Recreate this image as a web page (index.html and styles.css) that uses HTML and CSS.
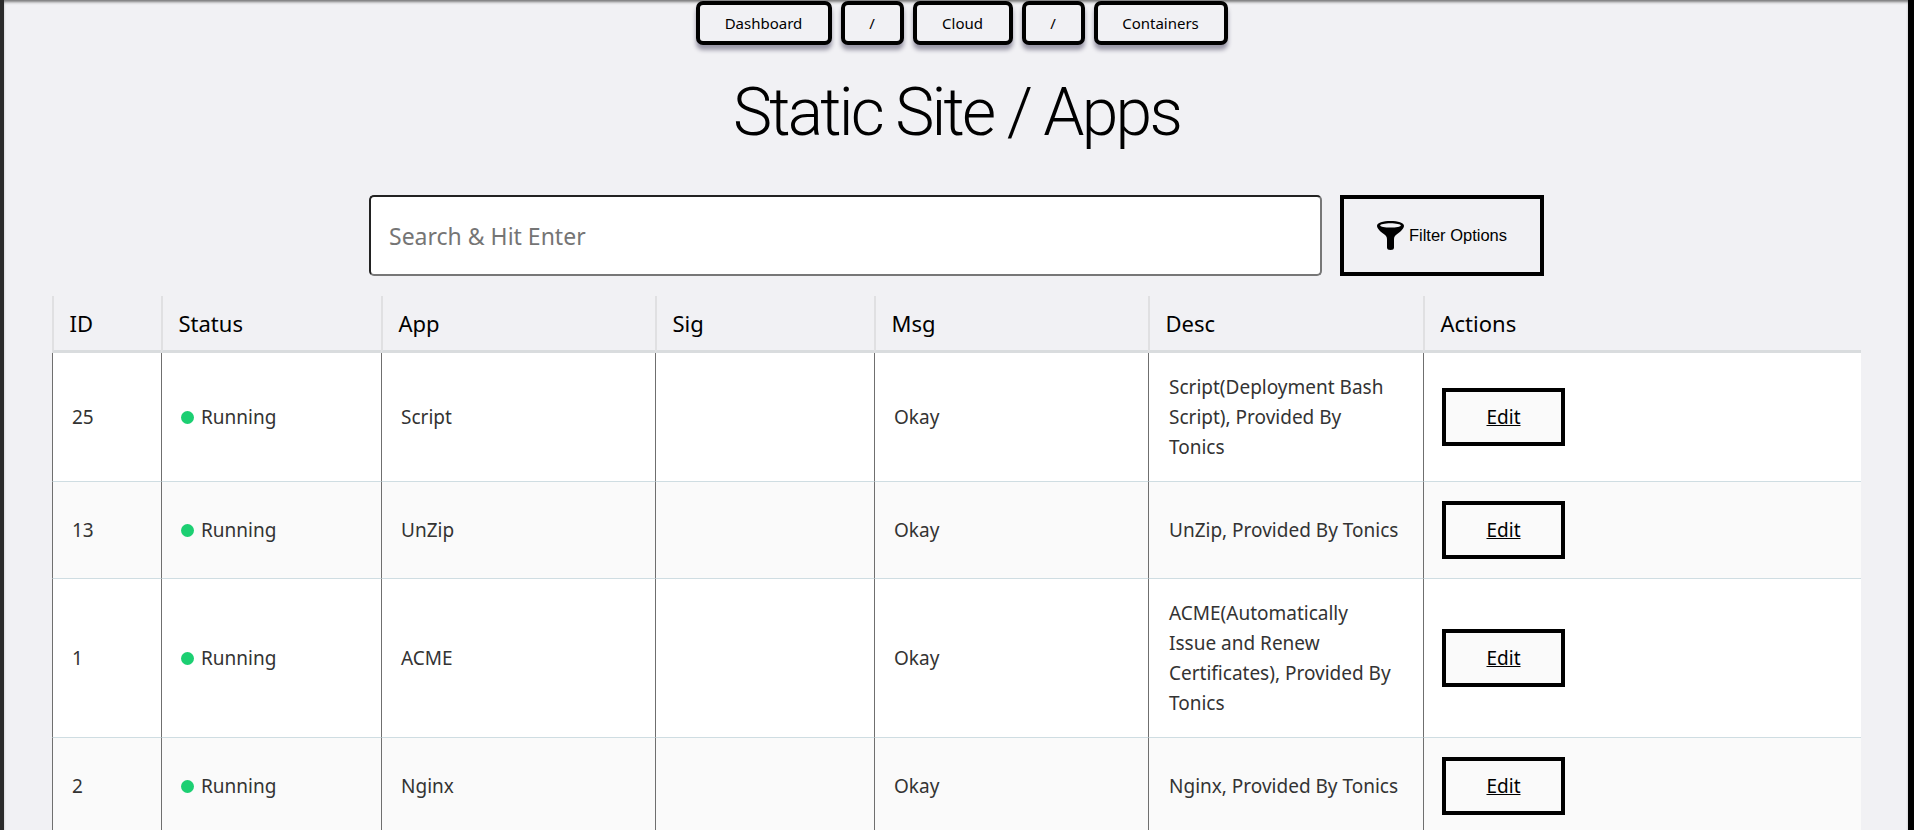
FILE: index.html
```html
<!DOCTYPE html>
<html lang="en">
<head>
<meta charset="utf-8">
<title>Static Site / Apps</title>
<link rel="stylesheet" href="styles.css">
</head>
<body>
<div class="frame">
  <nav class="crumbs">
    <a class="crumb crumb-dash">Dashboard</a>
    <a class="crumb crumb-sep">/</a>
    <a class="crumb crumb-cloud">Cloud</a>
    <a class="crumb crumb-sep">/</a>
    <a class="crumb crumb-cont">Containers</a>
  </nav>
  <h1 class="title">Static Site / Apps</h1>
  <div class="toolbar">
    <input class="search" type="text" placeholder="Search &amp; Hit Enter">
    <button class="filter" type="button">
      <svg class="funnel" viewBox="0 0 27 29" width="27" height="29" aria-hidden="true">
        <path fill="#000" fill-rule="evenodd" d="M13.500 0C6 0 0 2 0 4.800c0 2.500 3 5.700 6.800 8.200 2.500 1.700 3.200 3 3.200 5.500v8a3.500 2.500 0 0 0 7 0v-8c0-2.500.7-3.800 3.200-5.500C24 10.500 27 7.300 27 4.800 27 2 21 0 13.500 0zm0 2.200c5.700 0 10.300 1 10.300 2.200s-4.600 2.200-10.300 2.200S3.200 5.600 3.200 4.400s4.600-2.200 10.300-2.200z"/>
      </svg>
      <span>Filter Options</span>
    </button>
  </div>
  <table class="apps">
    <colgroup>
      <col class="c-id"><col class="c-status"><col class="c-app"><col class="c-sig"><col class="c-msg"><col class="c-desc"><col class="c-act">
    </colgroup>
    <thead>
      <tr><th>ID</th><th>Status</th><th>App</th><th>Sig</th><th>Msg</th><th>Desc</th><th>Actions</th></tr>
    </thead>
    <tbody>
      <tr>
        <td>25</td><td><span class="status"><i class="dot"></i>Running</span></td><td>Script</td><td></td><td>Okay</td>
        <td class="desc">Script(Deployment Bash Script), Provided By Tonics</td><td class="act"><a class="edit">Edit</a></td>
      </tr>
      <tr class="alt">
        <td>13</td><td><span class="status"><i class="dot"></i>Running</span></td><td>UnZip</td><td></td><td>Okay</td>
        <td class="desc">UnZip, Provided By Tonics</td><td class="act"><a class="edit">Edit</a></td>
      </tr>
      <tr>
        <td>1</td><td><span class="status"><i class="dot"></i>Running</span></td><td>ACME</td><td></td><td>Okay</td>
        <td class="desc">ACME(Automatically Issue and Renew Certificates), Provided By Tonics</td><td class="act"><a class="edit">Edit</a></td>
      </tr>
      <tr class="alt">
        <td>2</td><td><span class="status"><i class="dot"></i>Running</span></td><td>Nginx</td><td></td><td>Okay</td>
        <td class="desc">Nginx, Provided By Tonics</td><td class="act"><a class="edit">Edit</a></td>
      </tr>
    </tbody>
  </table>
</div>
</body>
</html>
```
FILE: styles.css
```css
* { box-sizing: border-box; }
html, body { margin: 0; height: 100%; overflow: hidden; }
body { background: #f1f1f4; font-family: "Noto Sans", Roboto, sans-serif; color: #000; }

.frame {
  height: 830px;
  overflow: hidden;
  background: #f1f1f4;
  border-left: 4px solid #2b2b2b;
  border-right: 6px solid #000;
  padding: 1px 47px 0 48px;
  box-shadow: inset 0 3px 3px -1px #777;
}

.crumbs { display: flex; justify-content: center; gap: 9px; margin-left: 10px; }
.crumb {
  display: flex; align-items: center; justify-content: center;
  height: 44px;
  border: 4px solid #000;
  border-radius: 7px;
  background: #f1f1f4;
  font-size: 15px;
  box-shadow: 0 5px 4px #9a98a8;
}
.crumb-dash { width: 136px; }
.crumb-sep { width: 63px; }
.crumb-cloud { width: 100px; }
.crumb-cont { width: 134px; }

.title {
  margin: 26px 0 0 0;
  text-align: center;
  font-family: Roboto, "Noto Sans", sans-serif;
  font-size: 66px;
  line-height: 84px;
  font-weight: 300;
  letter-spacing: -2.8px;
}

.toolbar { display: flex; justify-content: center; gap: 18px; margin: 40px 0 20px 0; }
.search {
  width: 953px; height: 81px;
  padding: 0 18px;
  background: #fff;
  border: 2px solid;
  border-color: #222 #777 #777 #222;
  border-radius: 5px;
  font: 23px "Noto Sans", Roboto, sans-serif;
  color: #333;
}
.search::placeholder { color: #757575; }
.filter {
  display: flex; align-items: center; justify-content: center; gap: 5px;
  width: 204px; height: 81px;
  padding: 0;
  background: #f1f1f4;
  border: 4px solid #000;
  font: 16.5px "Liberation Sans", Arial, sans-serif;
  color: #000;
}

.apps {
  width: 1809px;
  table-layout: fixed;
  border-collapse: separate;
  border-spacing: 0;
}
.c-id { width: 109px; }
.c-status { width: 220px; }
.c-app { width: 274px; }
.c-sig { width: 219px; }
.c-msg { width: 274px; }
.c-desc { width: 275px; }
.c-act { width: 438px; }

.apps th {
  height: 57px;
  padding: 0 0 0 15.5px;
  text-align: left;
  font-size: 22px;
  font-weight: 400;
  color: #000;
  border-left: 2px solid #e0e0e2;
  border-bottom: 3px solid #d9dcde;
}
.apps td {
  padding: 19px;
  background: #fff;
  font-size: 19px;
  line-height: 30px;
  color: #333;
  border-left: 1px solid #6f6f6f;
  border-bottom: 1px solid #cfdde2;
  vertical-align: middle;
}
.apps td.desc { padding-left: 20px; padding-right: 24px; }
.apps td.act { padding-left: 18px; }
.apps .alt td { background: #fafafa; }

.status { display: flex; align-items: center; gap: 7px; }
.dot { width: 13px; height: 13px; border-radius: 50%; background: #1ccf72; }

.edit {
  display: flex; align-items: center; justify-content: center;
  width: 123px; height: 58px;
  border: 4px solid #000;
  background: #fafafa;
  font-size: 19px;
  color: #000;
  text-decoration: underline;
}
```
